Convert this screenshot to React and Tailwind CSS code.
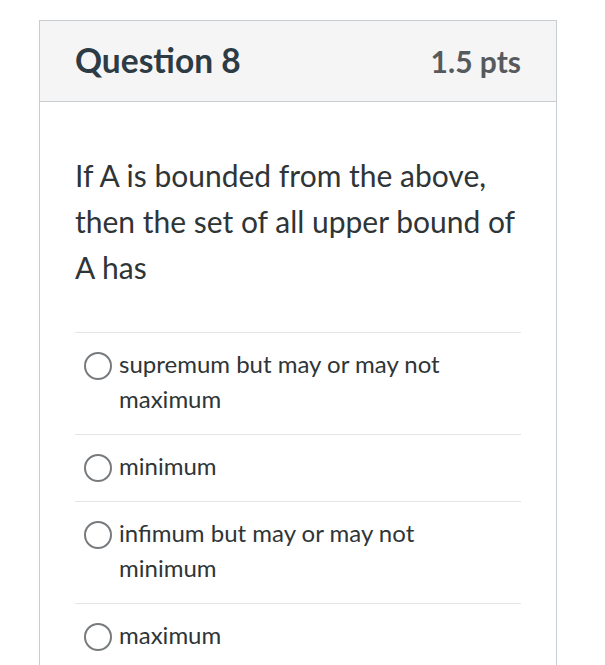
import React from 'react';

const answers = [
  'supremum but may or may not maximum',
  'minimum',
  'infimum but may or may not minimum',
  'maximum',
];

const App = () => {
  return (
    <div
      className="min-h-screen bg-white pt-5 pl-[39px] pr-[48px] overflow-hidden h-[665px]"
      style={{ fontFamily: 'Lato, "Open Sans", sans-serif' }}
    >
      <div className="border border-[#c7cdd1] border-b-0 text-[#2f3537] min-h-[700px]">
        <div className="h-[81px] bg-[#f5f5f5] border-b border-[#c7cdd1] px-[35px] flex items-center justify-between">
          <h2 className="text-[33.5px] font-bold leading-none text-[#2d3b45]">Question 8</h2>
          <div className="text-[30px] font-bold leading-none text-[#565a5d]">1.5 pts</div>
        </div>

        <div className="px-[35px] pt-[50px] pb-4">
          <p className="text-[30px] leading-[46px] mb-[42px]">
            If A is bounded from the above, then the set of all upper bound of A has
          </p>

          <div>
            {answers.map((a) => (
              <div key={a} className="border-t border-[#e5e5e5] pt-[13px] pb-[18px] flex items-start">
                <span className="mt-[6px] ml-[9px] mr-[7px] w-[28px] h-[28px] shrink-0 rounded-full border-2 border-[#777b7e] bg-white" />
                <span className="text-[24px] leading-[35px] pr-5">{a}</span>
              </div>
            ))}
          </div>
        </div>
      </div>
    </div>
  );
};

export default App;
